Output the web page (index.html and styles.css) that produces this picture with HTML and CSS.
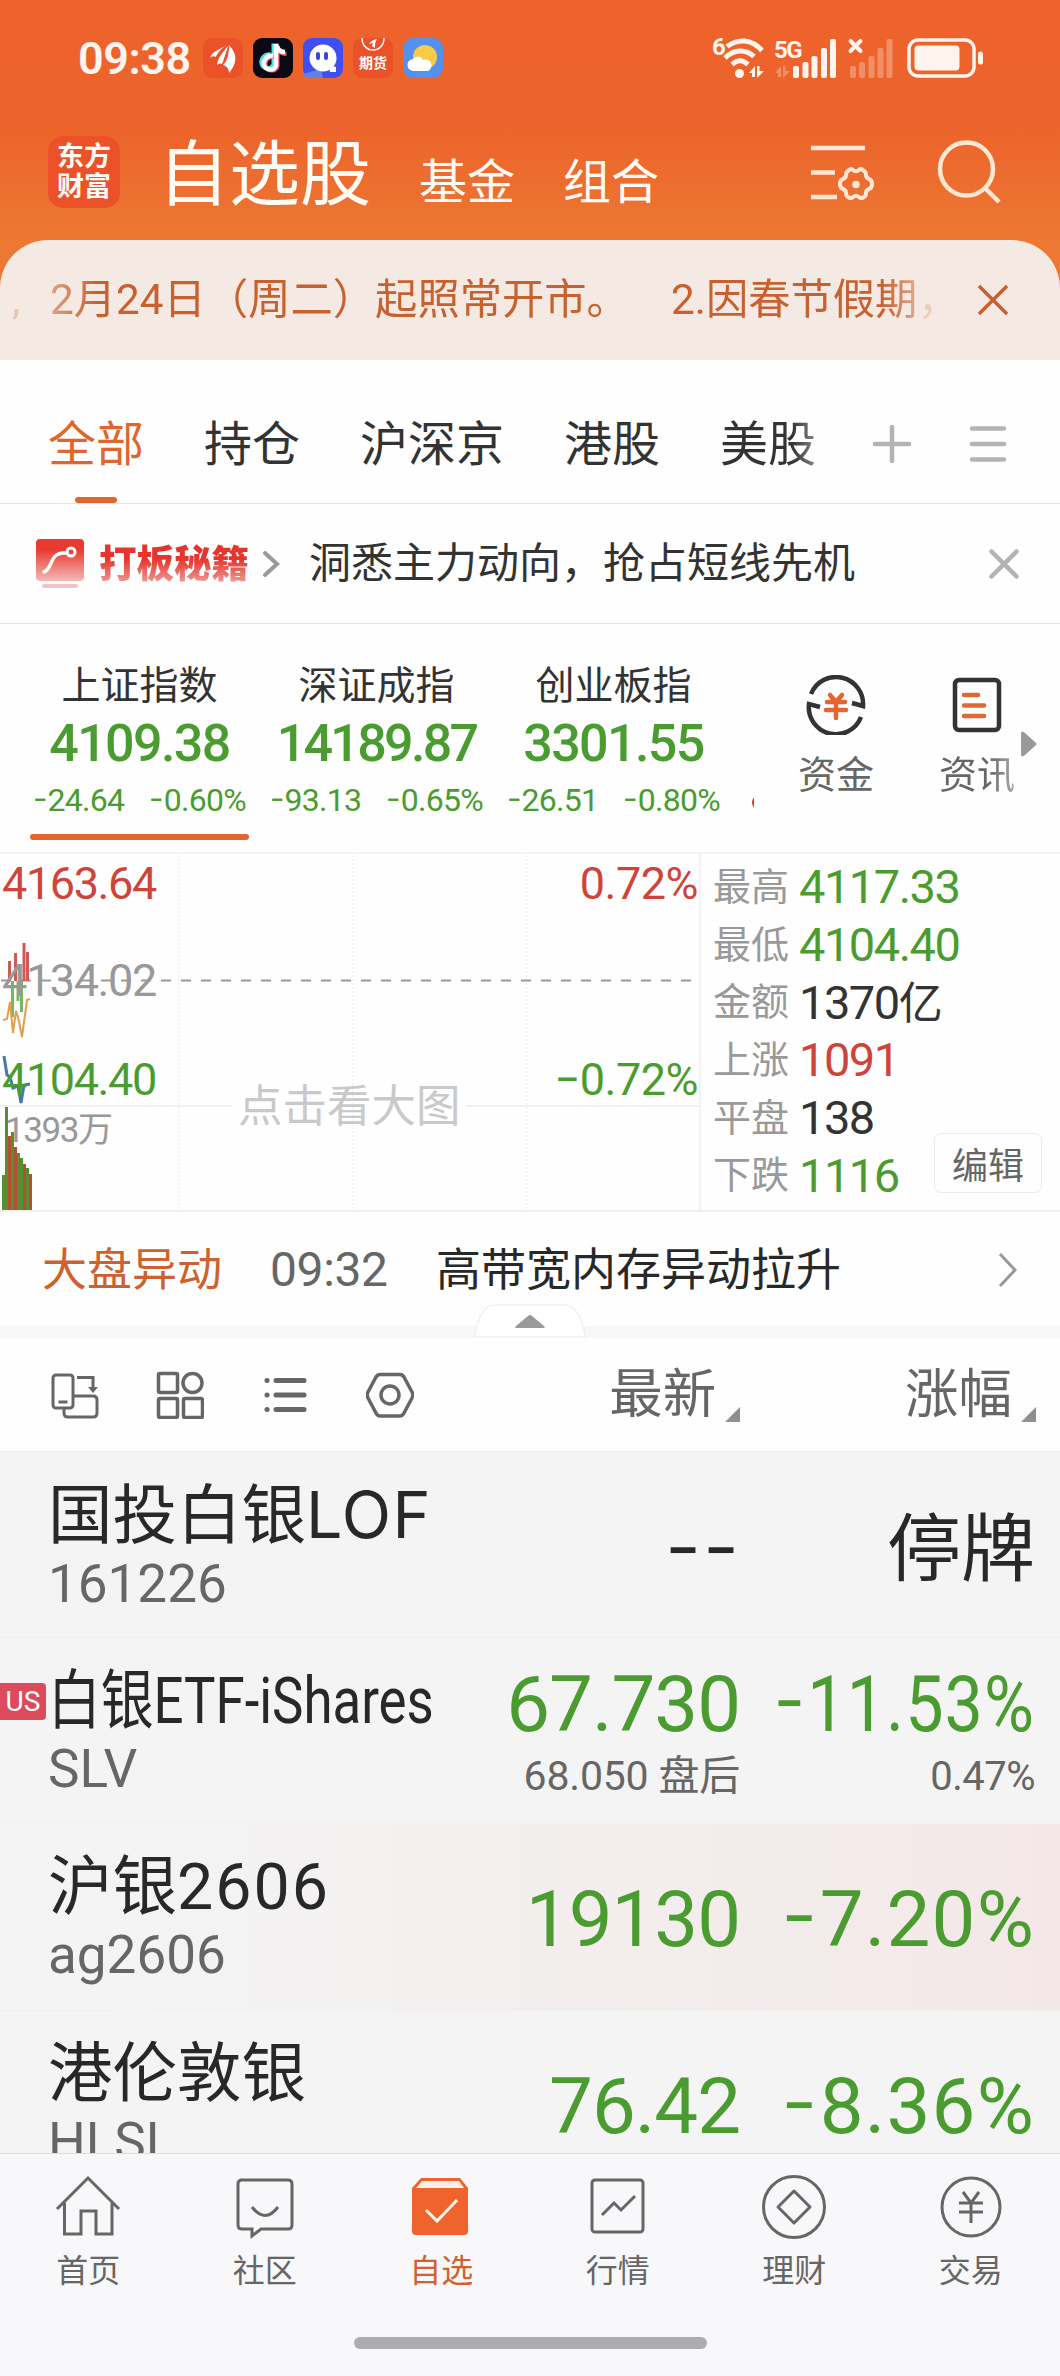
FILE: index.html
```html
<!DOCTYPE html>
<html lang="zh-CN">
<head>
  <meta charset="UTF-8">
  <title>自选股</title>
  <link rel="stylesheet" href="styles.css">
</head>
<body>

  <header class="top">
    <div class="status-bar">
      <span class="clock">09:38</span>
      <div class="app-icons">
        <svg class="app" viewBox="0 0 40 40"><rect width="40" height="40" rx="9" fill="#eb522a"/><path d="M7 20C9 13 18 11 24 7c-5 4-9 7-11 12-2-1-4-1-6 1zM14 27c1-8 6-13 12-20-4 9-5 15-7 19-2-1-4 0-5 1zM20 27c5-5 6-12 6-20 9 9 8 19 0 28 0-4-2-7-6-8z" fill="#fff"/><path d="M13 19.500C16 14 20 10 25 7M20 26c3-6 4-12 6-18" fill="none" stroke="#eb522a" stroke-width="1.200"/></svg>
        <svg class="app" viewBox="0 0 40 40"><rect width="40" height="40" rx="9" fill="#0b0a14"/><path d="M19 18c-6-1-10 4-9 9s9 7 12 1V7" transform="translate(-1.500 -1.500)" fill="none" stroke="#4fe3e0" stroke-width="4"/><path d="M20 18c-6-1-10 4-9 9s11 7 12 0V7c1 5 4 8 9 8" transform="translate(1.500 1)" fill="none" stroke="#f5567a" stroke-width="4"/><path d="M20 18c-6-1-10 4-9 9s11 7 12 0V6c1 5 4 8 9 8" fill="none" stroke="#fff" stroke-width="4.500"/></svg>
        <svg class="app" viewBox="0 0 40 40"><rect width="40" height="40" rx="9" fill="#4050f0"/><path d="M0 36l18-5 2 9H9c-5 0-8-2-9-4z" fill="#5c84e8"/><circle cx="20" cy="20" r="13.500" fill="#fff"/><path d="M26 27l7 2v5h-6z" fill="#fff"/><rect x="13" y="14" width="4" height="8" rx="2" fill="#3b45dd"/><rect x="21" y="14" width="4" height="8" rx="2" fill="#3b45dd"/></svg>
        <div class="app app-futures">
          <svg viewBox="0 0 40 15"><path d="M9 0c0 16 22 16 22 0" fill="none" stroke="#fff" stroke-width="1.500"/><path d="M16 6c2-3 4-4 8-5-2 3-2 6-2 9-1-1-2-1-3-2l1-3z" fill="#fff"/></svg>
          <span>期货</span>
        </div>
        <svg class="app" viewBox="0 0 40 40"><rect width="40" height="40" rx="10" fill="#5490ee"/><circle cx="22" cy="19" r="12" fill="#f7cb49"/><path d="M11 33a6 6 0 0 1-1-12 6 6 0 0 1 10 1 5 5 0 0 1 5 11z" fill="#fff"/></svg>
      </div>
      <div class="signals">
        <svg width="274" height="50" viewBox="0 -5 274 50" fill="#fff4ee">
          <text x="0" y="17" class="sig-text">6</text>
          <g fill="none" stroke="#fff4ee" stroke-width="5"><path d="M15 8.500c11-8 24-8 35 4"/><path d="M13 20c9-9 21-9 29-1.500"/><path d="M20 26.500c6-5 10-5 16 0"/></g>
          <circle cx="27.500" cy="35.500" r="4.500"/>
          <path d="M37 35l6-7v11h-3v-4zM45 28h2.500v5H52l-7 7z"/>
          <text x="62" y="20" class="sig-text">5G</text>
          <path d="M63 35l6-7v11h-3v-4zM71 28h2.500v5H78l-7 7z" opacity=".3"/>
          <rect x="81" y="28" width="6" height="12" rx="2"/><rect x="90.500" y="24" width="6" height="16" rx="2"/><rect x="99.500" y="18" width="6" height="22" rx="2"/><rect x="109" y="10" width="6" height="30" rx="2"/><rect x="118" y="1" width="6" height="39" rx="2"/>
          <path d="M138.500 3l10 10M148.500 3l-10 10" stroke="#fff4ee" stroke-width="4" stroke-linecap="round"/>
          <g opacity=".3"><rect x="138" y="28" width="6" height="12" rx="2"/><rect x="147" y="24" width="6" height="16" rx="2"/><rect x="156.500" y="18" width="6" height="22" rx="2"/><rect x="165.500" y="10" width="6" height="30" rx="2"/><rect x="174.500" y="1" width="6" height="39" rx="2"/></g>
          <rect x="197" y="2" width="65" height="36" rx="9" fill="none" stroke="#fff4ee" stroke-width="3.500"/>
          <rect x="202.500" y="7.500" width="45" height="25" rx="4"/><rect x="266" y="13.500" width="5" height="13" rx="2.500"/>
        </svg>
      </div>
    </div>

    <div class="title-bar">
      <div class="logo"><span>东方</span><span>财富</span></div>
      <nav class="main-tabs">
        <span class="current">自选股</span>
        <span>基金</span>
        <span>组合</span>
      </nav>
      <div class="title-tools">
        <svg width="64" height="64" viewBox="0 0 64 64" fill="none" stroke="#ffe6d3" stroke-width="4.500"><path d="M0 8h54M0 32.500h24M0 57h26"/><path d="M38 30q2-2 4 0 3 2.500 6 0 2-2 5 1 2 1 2 4 0 3 3 4 3 1 3 5t-3 5q-3 1-3 4 0 3-2 4-3 2-5 0-3-2.500-6 0-2 2-5 0-2-1-2-4 0-3-3-4-3-1-3-5t3-5q3-1 3-4 0-3 3-5z" stroke-width="4"/><circle cx="45" cy="44.500" r="3.800" fill="#ffe6d3" stroke="none"/></svg>
        <svg width="66" height="66" viewBox="0 0 66 66" fill="none" stroke="#ffe6d3" stroke-width="4.500"><circle cx="29.500" cy="30" r="26.500"/><path d="M48 49l14 14"/></svg>
      </div>
    </div>
  </header>

  <div class="notice-wrap">
    <div class="notice">
      <div class="notice-text"><span class="n0">,</span><span class="n1">2月24日（周二）起照常开市。</span><span class="n2">2.因春节假期，</span></div>
      <svg width="32" height="32" viewBox="0 0 32 32" stroke="#c9612f" stroke-width="3.500"><path d="M2 2l28 28M30 2L2 30"/></svg>
    </div>
  </div>

  <nav class="group-tabs">
    <div class="groups">
      <span class="active">全部</span><span>持仓</span><span>沪深京</span><span>港股</span><span class="fade">美股</span>
    </div>
    <svg class="plus" width="40" height="40" viewBox="0 0 40 40" stroke="#b3b3b3" stroke-width="4.500" stroke-linecap="round"><path d="M20 3v34M3 20h34"/></svg>
    <svg width="40" height="40" viewBox="0 0 40 40" stroke="#b3b3b3" stroke-width="4.500" stroke-linecap="round"><path d="M4 4.500h32M4 20h32M4 35.500h32"/></svg>
  </nav>

  <div class="promo">
    <svg width="48" height="50" viewBox="0 0 48 50">
      <defs><linearGradient id="pg" x1="0" y1="0" x2="0" y2="1"><stop offset=".25" stop-color="#e83a30"/><stop offset="1" stop-color="#f4b9b7"/></linearGradient></defs>
      <rect width="48" height="42" rx="4" fill="url(#pg)"/><rect x="6" y="45" width="36" height="4" rx="2" fill="#f1c3c5"/>
      <path d="M8 33c9-3 5-19 20-19h3" fill="none" stroke="#fff" stroke-width="3.500" stroke-linecap="round"/><circle cx="35" cy="13" r="4" fill="none" stroke="#fff" stroke-width="3"/>
    </svg>
    <strong>打板秘籍</strong>
    <svg width="18" height="30" viewBox="0 0 18 30" fill="none" stroke="#999" stroke-width="4" stroke-linecap="round"><path d="M3 4l12 11L3 26"/></svg>
    <p>洞悉主力动向，抢占短线先机</p>
    <svg width="32" height="32" viewBox="0 0 32 32" stroke="#b3b3b3" stroke-width="4.500" stroke-linecap="round"><path d="M3.500 3.500l25 25M28.500 3.500l-25 25"/></svg>
  </div>

  <section class="indices">
    <div class="index-list">
      <div class="index selected"><h3>上证指数</h3><b>4109.38</b><p><span><i class="neg">−</i>24.64</span><span><i class="neg">−</i>0.60%</span></p></div>
      <div class="index"><h3>深证成指</h3><b class="long">14189.87</b><p><span><i class="neg">−</i>93.13</span><span><i class="neg">−</i>0.65%</span></p></div>
      <div class="index"><h3>创业板指</h3><b>3301.55</b><p><span><i class="neg">−</i>26.51</span><span><i class="neg">−</i>0.80%</span></p></div>
      <i class="next-index"></i>
    </div>
    <div class="shortcut">
      <svg width="60" height="60" viewBox="0 0 60 60" fill="none" stroke="#333" stroke-width="4.500"><path d="M5 19a27 27 0 0 1 52 12l-11-3M55 42A27 27 0 0 1 3 29l11 3"/><path d="M24 20l6 7 6-7M21 27h18M20 35h20M30 27v16" stroke="#e8642e" stroke-linecap="round"/></svg>
      <span>资金</span>
    </div>
    <div class="shortcut news">
      <svg width="60" height="60" viewBox="0 0 60 60" fill="none" stroke="#333" stroke-width="4.500"><rect x="8" y="5" width="44" height="50" rx="4"/><path d="M17 20h14M17 30.500h20M17 41h20" stroke="#df6836" stroke-linecap="round"/></svg>
      <span>资讯</span>
    </div>
    <svg class="more" width="16" height="26" viewBox="0 0 16 26"><path d="M0 3q0-4 4-1l11 10q1 1 0 2L4 24q-4 3-4-1z" fill="#999"/></svg>
  </section>

  <section class="market">
    <div class="chart">
      <svg width="702" height="358" viewBox="0 0 702 358">
        <path d="M178.500 1v355M352.500 1v355M526.500 1v355" stroke="#eee" stroke-width="1" stroke-dasharray="2 2"/>
        <path d="M0 252h232M466 252h234" stroke="#f0f0f0" stroke-width="2"/>
        <path d="M1 126.500h696" stroke="#999" stroke-width="2" stroke-dasharray="10 10"/>
        <path d="M9.500 107v20M15.500 99v28M24 89v38M27.500 98v29" stroke="#cd5a53" stroke-width="3"/>
        <path d="M12.500 127v36M18 127v20M21.500 127v31" stroke="#78b65f" stroke-width="3"/>
        <path d="M3 166l4-1 3-17 3 31 3-22 3 10 3 16 5-37 3-1" fill="none" stroke="#e3a046" stroke-width="2"/>
        <path d="M4 202l3 19 3 2 3 11 5-2 3 17 3-18 6-1" fill="none" stroke="#4878b4" stroke-width="3"/>
        <g fill="#539130"><rect x="2" y="321" width="3" height="35"/><rect x="5" y="253" width="3" height="103"/><rect x="11" y="278" width="3" height="78"/><rect x="17" y="299" width="3" height="57"/><rect x="20" y="304" width="3" height="52"/><rect x="26" y="314" width="3" height="42"/></g>
        <g fill="#b94c35"><rect x="8" y="282" width="3" height="74"/><rect x="14" y="293" width="3" height="63"/><rect x="23" y="310" width="3" height="46"/><rect x="29" y="320" width="3" height="36"/></g>
        <g class="axis">
          <text x="2" y="45" class="up">4163.64</text><text x="698" y="45" class="up end">0.72%</text>
          <text x="2" y="141.500" class="flat">4134.02</text>
          <text x="2" y="241" class="down">4104.40</text><text x="698" y="241" class="down end">−0.72%</text>
          <text x="5" y="288" class="volume">1393万</text>
          <text x="238" y="268" class="hint">点击看大图</text>
        </g>
      </svg>
    </div>
    <dl class="stats">
      <div><dt>最高</dt><dd class="down">4117.33</dd></div>
      <div><dt>最低</dt><dd class="down">4104.40</dd></div>
      <div><dt>金额</dt><dd>1370<span class="unit">亿</span></dd></div>
      <div><dt>上涨</dt><dd class="up">1091</dd></div>
      <div><dt>平盘</dt><dd>138</dd></div>
      <div><dt>下跌</dt><dd class="down">1116</dd></div>
    </dl>
    <button class="edit">编辑</button>
  </section>

  <div class="alert">
    <span class="alert-tag">大盘异动</span>
    <time>09:32</time>
    <p>高带宽内存异动拉升</p>
    <svg width="20" height="36" viewBox="0 0 20 36" fill="none" stroke="#999" stroke-width="3"><path d="M2 2l15 16L2 34"/></svg>
    <svg class="handle" width="112" height="34" viewBox="0 0 112 34"><path d="M.5 33Q6 1 20 1h70q16 0 21.500 32z" fill="#fff" stroke="#f0f0f0" stroke-width="1.500"/><path d="M42 22l12-10q2-2 4 0l12 10q2 2-1 2H43q-3 0-1-2z" fill="#999"/></svg>
  </div>

  <div class="list-head">
    <div class="view-icons">
      <svg width="48" height="48" viewBox="0 0 48 48" fill="none" stroke="#666" stroke-width="3"><rect x="2" y="4" width="20" height="33" rx="3"/><path d="M7.500 31h9M22 25h20q4 0 4 4v13q0 4-4 4H17q-4 0-4-4v-5M26 6.500h16V16"/><path d="M37 16h10l-5 6z" fill="#666" stroke="none"/></svg>
      <svg width="48" height="48" viewBox="0 0 48 48" fill="none" stroke="#666" stroke-width="3.500"><rect x="2.500" y="2.500" width="19" height="19" rx="1.500"/><circle cx="36.500" cy="12" r="9.500"/><rect x="2.500" y="27.500" width="19" height="19" rx="1.500"/><rect x="27.500" y="27.500" width="19" height="19" rx="1.500"/></svg>
      <svg width="48" height="48" viewBox="0 0 48 48" fill="none" stroke="#666" stroke-width="5" stroke-linecap="round"><path d="M15 9.500h28M15 24h28M15 38.500h28M6 9.500h.1M6 24h.1M6 38.500h.1"/></svg>
      <svg width="48" height="48" viewBox="0 0 48 48" fill="none" stroke="#666" stroke-width="3.500"><path d="M14 3.500h20q2.500 0 4 2.500l8 15q1.500 3 0 6l-8 15q-1.500 3-4 3H14q-2.500 0-4-3L2 27q-1.500-3 0-6l8-15q1.500-2.500 4-2.500z"/><circle cx="24" cy="24" r="9"/></svg>
    </div>
    <span class="sort">最新</span>
    <span class="sort">涨幅</span>
  </div>

  <main class="stocks">
    <div class="stock halted">
      <div class="name"><h4>国投白银<span class="latin">LOF</span></h4><small>161226</small></div>
      <div class="price"><i class="neg">−</i><i class="neg">−</i></div>
      <div class="change">停牌</div>
    </div>
    <div class="stock">
      <i class="us">US</i>
      <div class="name"><h4><span class="tight">白银ETF-iShares</span></h4><small>SLV</small></div>
      <div class="price two">67.730<small>68.050 盘后</small></div>
      <div class="change two"><span class="squeeze"><i class="neg">−</i>11.53%</span><small>0.47%</small></div>
    </div>
    <div class="stock flash">
      <div class="name"><h4>沪银<span class="digits">2606</span></h4><small>ag2606</small></div>
      <div class="price">19130</div>
      <div class="change"><i class="neg">−</i>7.20%</div>
    </div>
    <div class="stock">
      <div class="name"><h4>港伦敦银</h4><small>HLSL</small></div>
      <div class="price">76.42</div>
      <div class="change"><i class="neg">−</i>8.36%</div>
    </div>
  </main>

  <footer class="bottom">
    <nav class="bottom-nav">
      <a><svg width="66" height="66" viewBox="0 0 66 66"><path d="M2 34L33 3l31 31M9.500 28v31H26V36h15v23h16V28"/></svg>首页</a>
      <a><svg width="66" height="66" viewBox="0 0 66 66"><path d="M8 5h48q4 0 4 4v41q0 4-4 4H29l-9 7v-7H10q-4 0-4-4V9q0-4 4-4z"/><path d="M20 32q13 17 26 0"/></svg>社区</a>
      <a class="on"><svg width="66" height="66" viewBox="0 0 66 66"><path d="M4 13l9-10h39l8 10v43q0 4-4 4H8q-4 0-4-4z" fill="#ee642c" stroke="none"/><path d="M14 6h37l5 7H8z" fill="#fdeee4" stroke="none"/><path d="M18 35l11 11 20-21" stroke="#fff3e6"/></svg>自选</a>
      <a><svg width="66" height="66" viewBox="0 0 66 66"><rect x="7" y="5" width="51" height="52" rx="3"/><path d="M17 40l12-12 7 7 14-14"/></svg>行情</a>
      <a><svg width="66" height="66" viewBox="0 0 66 66"><circle cx="33" cy="32" r="30.500"/><path d="M33 16l16 16-16 16-16-16z" stroke-linejoin="round"/></svg>理财</a>
      <a><svg width="66" height="66" viewBox="0 0 66 66"><circle cx="33" cy="32" r="29"/><path d="M25 17l8 11 8-11M21 28h24M21 37h24M33 28v20"/></svg>交易</a>
    </nav>
    <div class="home-bar"></div>
  </footer>

</body>
</html>
```

FILE: styles.css
```css
* {
  box-sizing: border-box;
  margin: 0;
  padding: 0;
}

body {
  width: 1060px;
  height: 2376px;
  overflow: hidden;
  display: flex;
  flex-direction: column;
  background: #fefefe;
  color: #333;
  font-family: Roboto, "Noto Sans CJK SC", sans-serif;
  line-height: 1;
}

svg {
  display: block;
  flex: none;
}

.up { color: #cf4439; fill: #cf4439; }
.down { color: #4b9c30; fill: #4b9c30; }
.flat { fill: #999; }

/* short minus sign */
.neg {
  display: inline-block;
  margin: 0 -0.035em;
  font-style: normal;
  transform: scaleX(.78);
}

/* header */
.top {
  height: 240px;
  background: linear-gradient(#ee632b 0, #ec632b 122px, #ec7833 240px);
  color: #fffcf5;
}

.status-bar {
  display: flex;
  align-items: center;
  height: 116px;
  padding: 0 74px 0 78px;
}

.clock {
  width: 125px;
  font-size: 45px;
  font-weight: 600;
  letter-spacing: -0.500px;
  color: #fff4ee;
}

.app-icons {
  display: flex;
  gap: 10px;
}

.app {
  width: 40px;
  height: 40px;
}

.app-futures {
  border-radius: 9px;
  background: #eb522a;
  color: #fff;
  font-size: 14px;
  font-weight: 700;
  text-align: center;
}

.app-futures span {
  display: block;
  margin-top: 3px;
}

.signals {
  margin-left: auto;
}

.sig-text {
  font-size: 24px;
  font-weight: 700;
  letter-spacing: -1.500px;
}

.title-bar {
  display: flex;
  align-items: center;
  height: 112px;
  padding: 0 57px 0 48px;
}

.logo {
  display: flex;
  flex-direction: column;
  justify-content: center;
  gap: 3px;
  width: 72px;
  height: 72px;
  border-radius: 15px;
  background: #eb522a;
  font-size: 27px;
  font-weight: 700;
  text-align: center;
}

.main-tabs {
  display: flex;
  align-items: baseline;
  gap: 48px;
  margin-left: 38px;
  padding-top: 4px;
  font-size: 48px;
}

.main-tabs .current {
  font-size: 71px;
}

.title-tools {
  display: flex;
  align-items: center;
  gap: 62px;
  margin-left: auto;
}

/* scrolling notice */
.notice-wrap {
  background: #ec7833;
}

.notice {
  display: flex;
  align-items: center;
  justify-content: space-between;
  height: 120px;
  padding: 0 51px 0 12px;
  border-radius: 48px 48px 0 0;
  background: #f4e9e3;
}

.notice-text {
  display: flex;
  width: 950px;
  white-space: nowrap;
  line-height: 60px;
  font-size: 42.300px;
  color: #c9612f;
  -webkit-mask-image: linear-gradient(90deg, rgba(0, 0, 0, .25) 0, rgba(0, 0, 0, .35) 30px, rgba(0, 0, 0, .6) 45px, #000 85px, #000 870px, rgba(0, 0, 0, .6) 898px, rgba(0, 0, 0, .2) 912px);
  mask-image: linear-gradient(90deg, rgba(0, 0, 0, .25) 0, rgba(0, 0, 0, .35) 30px, rgba(0, 0, 0, .6) 45px, #000 85px, #000 870px, rgba(0, 0, 0, .6) 898px, rgba(0, 0, 0, .2) 912px);
}

.n0 { flex: none; width: 38px; }
.n1 { flex: none; width: 621px; }

/* group tabs */
.group-tabs {
  display: flex;
  align-items: center;
  height: 144px;
  padding: 24px 52px 0 48px;
  border-bottom: 1px solid #e4e4e4;
}

.groups {
  display: flex;
  gap: 60px;
  font-size: 48px;
}

.groups span {
  position: relative;
  line-height: 119px;
  padding-top: 2px;
}

.groups .active {
  color: #e0662f;
}

.groups .active::after {
  content: "";
  position: absolute;
  left: 27px;
  bottom: 1px;
  width: 42px;
  height: 6px;
  border-radius: 3px;
  background: #e0662f;
}

.groups .fade {
  background: linear-gradient(90deg, #333 75%, #888);
  -webkit-background-clip: text;
  background-clip: text;
  color: transparent;
}

.plus {
  margin: 0 56px 0 auto;
}

/* promo */
.promo {
  display: flex;
  align-items: center;
  height: 120px;
  padding: 0 40px 0 36px;
  border-bottom: 1px solid #e4e4e4;
}

.promo strong {
  margin: 0 13px 0 15px;
  font-size: 37.500px;
  font-weight: 900;
  line-height: 50px;
  background: linear-gradient(#e5352c 40%, #f0a9a6 95%);
  -webkit-background-clip: text;
  background-clip: text;
  color: transparent;
}

.promo p {
  margin: 0 auto 0 29px;
  font-size: 42px;
}

/* indices */
.indices {
  display: flex;
  height: 230px;
  border-bottom: 2px solid #f5f5f5;
}

.index-list {
  display: flex;
  width: 754px;
  padding-left: 21px;
  overflow: hidden;
}

.index {
  position: relative;
  flex: none;
  width: 237px;
  padding-top: 37px;
  text-align: center;
}

.index h3 {
  font-size: 39px;
  font-weight: 400;
  line-height: 50px;
}

.index b {
  display: block;
  font-size: 52px;
  font-weight: 500;
  line-height: 66px;
  letter-spacing: -1.600px;
  color: #4b9c30;
}

.index .long {
  letter-spacing: -2.700px;
}

.index p {
  display: flex;
  justify-content: space-between;
  padding: 0 12px 0 11px;
  font-size: 32px;
  line-height: 46px;
  letter-spacing: -0.700px;
  color: #4b9c30;
}

.selected::after {
  content: "";
  position: absolute;
  left: 9px;
  bottom: 12px;
  width: 219px;
  height: 6px;
  border-radius: 3px;
  background: #e8642e;
}

.next-index {
  flex: none;
  width: 12px;
  height: 13px;
  margin: 172px 0 0 20px;
  border-radius: 6px;
  background: #cf4439;
}

.shortcut {
  display: flex;
  flex-direction: column;
  align-items: center;
  gap: 21px;
  width: 76px;
  margin-left: 44px;
  padding-top: 51px;
  font-size: 38px;
  color: #666;
}

.shortcut.news {
  margin-left: 65px;
}

.news span {
  background: linear-gradient(90deg, #666 65%, #aaa);
  -webkit-background-clip: text;
  background-clip: text;
  color: transparent;
}

.more {
  margin: 107px 0 0 6px;
}

/* market overview */
.market {
  position: relative;
  display: flex;
  height: 358px;
  border-bottom: 2px solid #f0f0f0;
}

.chart {
  width: 701px;
  border-right: 2px solid #f2f2f2;
}

.axis text {
  font-size: 45px;
  letter-spacing: -1.400px;
}

.axis .end {
  text-anchor: end;
  letter-spacing: -0.500px;
}

.axis .volume {
  font-size: 35px;
  fill: #999;
  letter-spacing: -1.400px;
}

.axis .hint {
  font-size: 44.500px;
  letter-spacing: 0;
  fill: #c9c9c9;
}

.stats {
  padding: 4px 0 0 12px;
}

.stats div {
  display: flex;
  align-items: center;
  height: 57.700px;
}

.stats dt {
  width: 86px;
  font-size: 38px;
  color: #999;
}

.stats dd {
  font-size: 47px;
  letter-spacing: -1.500px;
}

.unit {
  font-size: 44px;
}

.edit {
  position: absolute;
  right: 18px;
  bottom: 17px;
  width: 108px;
  height: 60px;
  border: 1px solid #ececec;
  border-radius: 7px;
  background: #fefefe;
  color: #666;
  font: 36px Roboto, "Noto Sans CJK SC", sans-serif;
}

/* market alert */
.alert {
  position: relative;
  display: flex;
  align-items: center;
  height: 126px;
  padding: 2px 42px 0;
  border-bottom: 12px solid #f6f8fa;
  font-size: 45px;
}

.alert-tag {
  width: 228px;
  color: #cd622e;
}

.alert time {
  width: 166px;
  font-size: 48px;
  letter-spacing: -0.400px;
  color: #666;
}

.alert p {
  flex: 1;
  color: #282828;
}

.handle {
  position: absolute;
  left: 474px;
  bottom: -12px;
}

/* list header */
.list-head {
  display: flex;
  align-items: center;
  height: 114px;
  padding: 0 24px 0 51px;
  border-bottom: 1px solid #ececec;
}

.view-icons {
  display: flex;
  gap: 57px;
  width: 394px;
}

.sort {
  position: relative;
  width: 296px;
  padding-right: 24px;
  text-align: right;
  font-size: 53.500px;
  color: #666;
}

.sort::after {
  content: "";
  position: absolute;
  right: 0;
  bottom: -1px;
  border-left: 15px solid transparent;
  border-bottom: 15px solid #8e8e93;
}

/* stock rows */
.stocks {
  height: 701px;
  overflow: hidden;
  background: #f4f4f4;
}

.stock {
  position: relative;
  display: flex;
  height: 186.200px;
  padding: 0 25px 0 48px;
  border-bottom: 1px solid #f0f0f0;
}

.name {
  width: 392px;
  padding-top: 25px;
  color: #282828;
}

.name h4 {
  font-size: 64.500px;
  font-weight: 400;
  line-height: 76px;
  white-space: nowrap;
}

.name small {
  display: block;
  font-size: 53px;
  line-height: 60px;
  color: #666;
}

.latin {
  font-family: Inter, sans-serif;
  letter-spacing: 1.200px;
}

.digits {
  letter-spacing: 2px;
}

.tight {
  display: inline-block;
  transform: scaleX(.818);
  transform-origin: left;
}

.price,
.change {
  padding-top: 3px;
  font-size: 78px;
  line-height: 185px;
  letter-spacing: -1px;
  text-align: right;
  color: #4b9c30;
}

.price { width: 300px; }

.change {
  width: 295px;
  letter-spacing: 1.200px;
}

.two {
  padding-top: 21px;
  line-height: 92px;
  white-space: nowrap;
}

.squeeze {
  display: block;
  width: 315px;
  margin-left: -20px;
  transform: scaleX(.875);
  transform-origin: right;
}

.two small {
  display: block;
  font-size: 41px;
  line-height: 51px;
  letter-spacing: -0.200px;
  color: #666;
}

.change.two small {
  font-size: 40px;
  letter-spacing: -0.500px;
}

.halted .price,
.halted .change {
  color: #282828;
}

.halted .price {
  padding-top: 7px;
}

.halted .change {
  padding-top: 5px;
  font-size: 74px;
  letter-spacing: 0;
}

.us {
  position: absolute;
  left: 0;
  top: 45px;
  width: 46px;
  height: 37px;
  border-radius: 0 4px 4px 0;
  background: #dc4a5c;
  color: #fff;
  font: 28px/38px Roboto, sans-serif;
  text-align: center;
}

.flash {
  background: linear-gradient(90deg, #f4f4f4 10%, #f3e8e7);
}

/* bottom navigation */
.bottom {
  flex: 1;
  border-top: 1px solid #dedede;
  background: #f8f8fa;
}

.bottom-nav {
  display: flex;
  margin-right: 1px;
  padding-top: 21px;
}

.bottom-nav a {
  flex: 1;
  display: flex;
  flex-direction: column;
  align-items: center;
  gap: 14px;
  font-size: 32px;
  color: #666;
}

.bottom-nav svg {
  fill: none;
  stroke: #666;
  stroke-width: 3;
}

.bottom-nav .on {
  color: #d0622f;
}

.home-bar {
  width: 353px;
  height: 12px;
  margin: 50px auto 0;
  border-radius: 6px;
  background: #adadaf;
}
```
